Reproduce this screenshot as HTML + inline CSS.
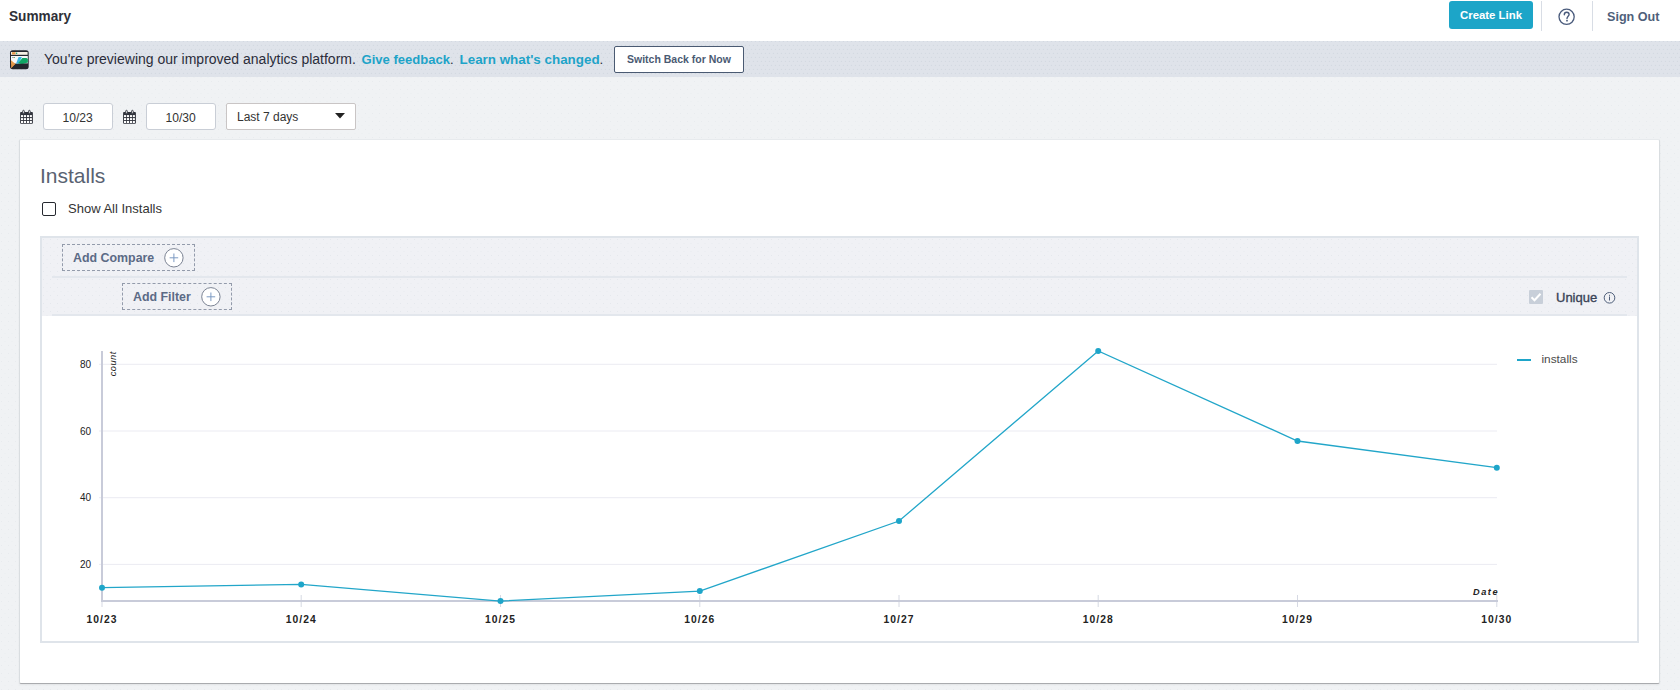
<!DOCTYPE html>
<html><head><meta charset="utf-8">
<style>
*{box-sizing:border-box;margin:0;padding:0}
html,body{width:1680px;height:690px;overflow:hidden}
body{position:relative;background-color:#f0f2f4;background-image:radial-gradient(circle at 1.5px 1.5px,#e8ebee 0.5px,transparent 1px),radial-gradient(circle at 1.5px 1.5px,#eaedf0 0.5px,transparent 1px);background-size:7px 8px,7px 8px;background-position:0 0,3.5px 4px;font-family:"Liberation Sans",sans-serif;color:#333}
.abs{position:absolute}
.t{position:absolute;white-space:nowrap;line-height:1}
#header{left:0;top:0;width:1680px;height:41px;background:#fff}
#banner{left:0;top:41px;width:1680px;height:36px;background-color:#dfe3ea;background-image:radial-gradient(circle at 1.5px 1.5px,#d4d9e1 0.55px,transparent 1.05px),radial-gradient(circle at 1.5px 1.5px,#d4d9e1 0.55px,transparent 1.05px);background-size:4px 8px,4px 8px;background-position:0 3px,2px 7px}
</style></head><body>

<div id="header" class="abs"></div>
<div class="t" style="left:9.3px;top:9px;font-size:14.5px;font-weight:bold;color:#2e3038;transform:scaleX(0.94);transform-origin:0 0">Summary</div>
<div class="abs" style="left:1449px;top:1px;width:84px;height:28px;background:#1ca5c8;border-radius:3px"></div>
<div class="t" style="left:1460px;top:10px;font-size:11.4px;font-weight:bold;color:#fff">Create Link</div>
<div class="abs" style="left:1541px;top:1px;width:1px;height:30px;background:#d8dde5"></div>
<div class="abs" style="left:1592px;top:1px;width:1px;height:30px;background:#d8dde5"></div>
<svg class="abs" style="left:1557px;top:7px" width="20" height="20" viewBox="0 0 20 20"><circle cx="9.6" cy="9.8" r="7.6" fill="none" stroke="#4a5b7c" stroke-width="1.3"/><path d="M7.3 7.7C7.3 6.1 8.3 5.3 9.7 5.3C11.1 5.3 12.1 6.2 12.1 7.5C12.1 9.2 10 9.5 10 11.6" fill="none" stroke="#4a5b7c" stroke-width="1.4" stroke-linecap="round"/><circle cx="10" cy="13.7" r="0.9" fill="#4a5b7c"/></svg>
<div class="t" style="left:1607px;top:10.5px;font-size:12.6px;font-weight:bold;color:#4f5f7a">Sign Out</div>

<div id="banner" class="abs"></div>
<div class="t" style="left:44px;top:52.3px;font-size:14px;color:#2b2d3a">You're previewing our improved analytics platform.</div>
<div class="t" style="left:361.5px;top:52.8px;font-size:13.05px;font-weight:bold;color:#1ea3c8">Give feedback<span style="color:#2b2d3a;font-weight:normal">.</span></div>
<div class="t" style="left:459.5px;top:52.8px;font-size:13.4px;font-weight:bold;color:#1ea3c8">Learn what's changed<span style="color:#2b2d3a;font-weight:normal">.</span></div>
<div class="abs" style="left:614px;top:46px;width:130px;height:27px;background:#fff;border:1.5px solid #4a5a72;border-radius:2px"></div>
<div class="t" style="left:627px;top:54px;font-size:10.5px;font-weight:bold;color:#4a5a72">Switch Back for Now</div>

<!-- date controls -->
<div class="abs" style="left:43px;top:103px;width:70px;height:27px;background:#fff;border:1px solid #c9ced6;border-radius:3px"></div>
<div class="t" style="left:62.5px;top:112px;font-size:12.1px;color:#333">10/23</div>
<div class="abs" style="left:146px;top:103px;width:70px;height:27px;background:#fff;border:1px solid #c9ced6;border-radius:3px"></div>
<div class="t" style="left:165.5px;top:112px;font-size:12.1px;color:#333">10/30</div>
<div class="abs" style="left:226px;top:103px;width:130px;height:27px;background:#fff;border:1px solid #c9c5c5;border-radius:2px"></div>
<div class="t" style="left:237px;top:110.5px;font-size:12px;color:#333">Last 7 days</div>

<!-- card -->
<div class="abs" style="left:19px;top:139px;width:1641px;height:545px;background:#fff;border:1px solid;border-color:#e7eaed #d9dde0 #a9abae #d9dde0;border-radius:2px;box-shadow:0 1px 2px rgba(0,0,0,.06)"></div>
<div class="t" style="left:40px;top:165px;font-size:21px;color:#596271">Installs</div>
<div class="abs" style="left:42px;top:202px;width:14px;height:14px;border:1px solid #25282f;border-radius:2px;background:#fff"></div>
<div class="t" style="left:68px;top:202px;font-size:13px;color:#333">Show All Installs</div>

<!-- chart container -->
<div class="abs" style="left:40px;top:236px;width:1599px;height:407px;border:2px solid #dfe4ea;background:#fff"></div>
<div class="abs" style="left:42px;top:238px;width:1595px;height:78px;background-color:#f0f1f5;background-image:radial-gradient(circle at 1.5px 1.5px,#e5e8ed 0.5px,transparent 1px),radial-gradient(circle at 1.5px 1.5px,#e7eaef 0.5px,transparent 1px);background-size:7px 8px,7px 8px;background-position:0 0,3.5px 4px"></div>


<!-- compare/filter rows -->
<div class="abs" style="left:52px;top:276px;width:1575px;height:2px;background:#e3e7ed"></div>
<div class="abs" style="left:52px;top:314px;width:1575px;height:2px;background:#e3e7ed"></div>
<div class="abs" style="left:62px;top:244px;width:133px;height:27px;border:1px dashed #939bab"></div>
<div class="t" style="left:73px;top:252px;font-size:12.4px;font-weight:bold;color:#5b6a85">Add Compare</div>
<svg class="abs" style="left:163px;top:248px" width="22" height="22" viewBox="0 0 22 22"><circle cx="10.9" cy="9.8" r="9.2" fill="#fff" stroke="#7b8393" stroke-width="1"/><path d="M10.9 5.5v8.6M6.6 9.8h8.6" stroke="#7c9ac2" stroke-width="1"/></svg>
<div class="abs" style="left:122px;top:283px;width:110px;height:27px;border:1px dashed #939bab"></div>
<div class="t" style="left:133px;top:291px;font-size:12.4px;font-weight:bold;color:#5b6a85">Add Filter</div>
<svg class="abs" style="left:200px;top:287px" width="22" height="22" viewBox="0 0 22 22"><circle cx="10.9" cy="9.8" r="9.2" fill="#fff" stroke="#7b8393" stroke-width="1"/><path d="M10.9 5.5v8.6M6.6 9.8h8.6" stroke="#7c9ac2" stroke-width="1"/></svg>
<div class="abs" style="left:1529px;top:290px;width:14px;height:14px;background:#c8cfd9;border-radius:1px"></div>
<svg class="abs" style="left:1529px;top:290px" width="14" height="14" viewBox="0 0 14 14"><path d="M2.5 7.2l3 3 6-6.5" fill="none" stroke="#fff" stroke-width="2"/></svg>
<div class="t" style="left:1556px;top:290.5px;font-size:13px;-webkit-text-stroke:0.35px #3a4356;color:#3a4356">Unique</div>
<svg class="abs" style="left:1603px;top:291px" width="14" height="14" viewBox="0 0 14 14"><circle cx="6.5" cy="6.8" r="5.3" fill="none" stroke="#4f5f7a" stroke-width="1"/><rect x="6" y="5.5" width="1" height="4" fill="#4f5f7a"/><rect x="6" y="3.8" width="1" height="1" fill="#4f5f7a"/></svg>

<!-- calendar icons -->
<svg class="abs" style="left:16px;top:106px" width="22" height="22" viewBox="0 0 22 22"><rect x="4.1" y="6" width="12.8" height="11.7" rx="0.9" fill="#30333c"/><g fill="#fff"><rect x="5.0" y="9.1" width="2.1" height="2"/><rect x="7.9" y="9.1" width="2.1" height="2"/><rect x="10.9" y="9.1" width="2.1" height="2"/><rect x="13.8" y="9.1" width="2.1" height="2"/><rect x="5.0" y="12.1" width="2.1" height="2"/><rect x="7.9" y="12.1" width="2.1" height="2"/><rect x="10.9" y="12.1" width="2.1" height="2"/><rect x="13.8" y="12.1" width="2.1" height="2"/><rect x="5.0" y="15.0" width="2.1" height="2"/><rect x="7.9" y="15.0" width="2.1" height="2"/><rect x="10.9" y="15.0" width="2.1" height="2"/><rect x="13.8" y="15.0" width="2.1" height="2"/></g><rect x="6.7" y="4.3" width="1.6" height="3.4" rx="0.8" fill="#fff" stroke="#30333c" stroke-width="0.9"/><rect x="12.6" y="4.3" width="1.6" height="3.4" rx="0.8" fill="#fff" stroke="#30333c" stroke-width="0.9"/></svg>
<svg class="abs" style="left:119px;top:106px" width="22" height="22" viewBox="0 0 22 22"><rect x="4.1" y="6" width="12.8" height="11.7" rx="0.9" fill="#30333c"/><g fill="#fff"><rect x="5.0" y="9.1" width="2.1" height="2"/><rect x="7.9" y="9.1" width="2.1" height="2"/><rect x="10.9" y="9.1" width="2.1" height="2"/><rect x="13.8" y="9.1" width="2.1" height="2"/><rect x="5.0" y="12.1" width="2.1" height="2"/><rect x="7.9" y="12.1" width="2.1" height="2"/><rect x="10.9" y="12.1" width="2.1" height="2"/><rect x="13.8" y="12.1" width="2.1" height="2"/><rect x="5.0" y="15.0" width="2.1" height="2"/><rect x="7.9" y="15.0" width="2.1" height="2"/><rect x="10.9" y="15.0" width="2.1" height="2"/><rect x="13.8" y="15.0" width="2.1" height="2"/></g><rect x="6.7" y="4.3" width="1.6" height="3.4" rx="0.8" fill="#fff" stroke="#30333c" stroke-width="0.9"/><rect x="12.6" y="4.3" width="1.6" height="3.4" rx="0.8" fill="#fff" stroke="#30333c" stroke-width="0.9"/></svg>
<svg class="abs" style="left:335px;top:113px" width="10" height="6" viewBox="0 0 10 6"><path d="M0 0h10L5 5.5z" fill="#222"/></svg>
<!-- banner icon -->
<svg class="abs" style="left:0;top:40px" width="40" height="40" viewBox="0 40 40 40">
<rect x="10" y="50.3" width="18.7" height="18.9" rx="2.6" fill="#25272f"/>
<rect x="11" y="52" width="16.6" height="2.8" fill="#f5efe4"/>
<rect x="12" y="52.2" width="3.5" height="2.2" fill="#e69847"/>
<circle cx="16.6" cy="53.3" r="0.8" fill="#17a46b"/>
<rect x="11" y="56" width="16.8" height="7.6" fill="#f7f8f9"/>
<circle cx="12.7" cy="57.4" r="0.5" fill="#3b8fd0"/><circle cx="13.5" cy="57.4" r="0.5" fill="#e69847"/><circle cx="14.5" cy="57.4" r="0.5" fill="#17a46b"/>
<path d="M11 60.3 L15.6 64 L11.2 68.6z" fill="#e3974a"/>
<path d="M16 63.8 L18.6 57 L21.8 57 L19 63.6z" fill="#3bb5e2"/>
<path d="M18.1 63.3 L22.3 58.1 L26.5 58 L27.9 59.1 L27.9 62.6 L22 64.2z" fill="#10a765"/>
<path d="M15.6 63.9 L27.9 63.4 L27.9 68.6 L11.2 68.6z" fill="#23262d"/>
</svg>
<svg class="abs" style="left:0;top:0" width="1680" height="690" viewBox="0 0 1680 690">
<line x1="99" y1="364.3" x2="1497" y2="364.3" stroke="#ebebf2" stroke-width="1"/>
<text x="91" y="367.8" text-anchor="end" font-size="10" fill="#222">80</text>
<line x1="99" y1="431.0" x2="1497" y2="431.0" stroke="#ebebf2" stroke-width="1"/>
<text x="91" y="434.5" text-anchor="end" font-size="10" fill="#222">60</text>
<line x1="99" y1="497.7" x2="1497" y2="497.7" stroke="#ebebf2" stroke-width="1"/>
<text x="91" y="501.2" text-anchor="end" font-size="10" fill="#222">40</text>
<line x1="99" y1="564.4" x2="1497" y2="564.4" stroke="#ebebf2" stroke-width="1"/>
<text x="91" y="567.9" text-anchor="end" font-size="10" fill="#222">20</text>
<line x1="102.0" y1="595" x2="102.0" y2="607" stroke="#d6d9e3" stroke-width="1"/>
<text x="102.0" y="623" text-anchor="middle" font-size="10.3" font-weight="bold" letter-spacing="1.05" fill="#222">10/23</text>
<line x1="301.2" y1="595" x2="301.2" y2="607" stroke="#d6d9e3" stroke-width="1"/>
<text x="301.2" y="623" text-anchor="middle" font-size="10.3" font-weight="bold" letter-spacing="1.05" fill="#222">10/24</text>
<line x1="500.5" y1="595" x2="500.5" y2="607" stroke="#d6d9e3" stroke-width="1"/>
<text x="500.5" y="623" text-anchor="middle" font-size="10.3" font-weight="bold" letter-spacing="1.05" fill="#222">10/25</text>
<line x1="699.8" y1="595" x2="699.8" y2="607" stroke="#d6d9e3" stroke-width="1"/>
<text x="699.8" y="623" text-anchor="middle" font-size="10.3" font-weight="bold" letter-spacing="1.05" fill="#222">10/26</text>
<line x1="899.0" y1="595" x2="899.0" y2="607" stroke="#d6d9e3" stroke-width="1"/>
<text x="899.0" y="623" text-anchor="middle" font-size="10.3" font-weight="bold" letter-spacing="1.05" fill="#222">10/27</text>
<line x1="1098.2" y1="595" x2="1098.2" y2="607" stroke="#d6d9e3" stroke-width="1"/>
<text x="1098.2" y="623" text-anchor="middle" font-size="10.3" font-weight="bold" letter-spacing="1.05" fill="#222">10/28</text>
<line x1="1297.5" y1="595" x2="1297.5" y2="607" stroke="#d6d9e3" stroke-width="1"/>
<text x="1297.5" y="623" text-anchor="middle" font-size="10.3" font-weight="bold" letter-spacing="1.05" fill="#222">10/29</text>
<line x1="1496.8" y1="595" x2="1496.8" y2="607" stroke="#d6d9e3" stroke-width="1"/>
<text x="1496.8" y="623" text-anchor="middle" font-size="10.3" font-weight="bold" letter-spacing="1.05" fill="#222">10/30</text>
<rect x="101" y="351" width="2" height="251" fill="#c8cbd9"/>
<rect x="101" y="600" width="1397" height="2" fill="#c8cbd9"/>
<polyline fill="none" stroke="#22a6c9" stroke-width="1.3" points="102.0,587.7 301.2,584.4 500.5,601.1 699.8,591.1 899.0,521.0 1098.2,351.0 1297.5,441.0 1496.8,467.7"/>
<circle cx="102.0" cy="587.7" r="3" fill="#1ea5c9"/>
<circle cx="301.2" cy="584.4" r="3" fill="#1ea5c9"/>
<circle cx="500.5" cy="601.1" r="3" fill="#1ea5c9"/>
<circle cx="699.8" cy="591.1" r="3" fill="#1ea5c9"/>
<circle cx="899.0" cy="521.0" r="3" fill="#1ea5c9"/>
<circle cx="1098.2" cy="351.0" r="3" fill="#1ea5c9"/>
<circle cx="1297.5" cy="441.0" r="3" fill="#1ea5c9"/>
<circle cx="1496.8" cy="467.7" r="3" fill="#1ea5c9"/>
<text transform="translate(115.8,376.3) rotate(-90)" font-size="9.3" font-style="italic" letter-spacing="0.45" fill="#222">count</text>
<text x="1499" y="594.6" text-anchor="end" font-size="9.2" font-weight="bold" font-style="italic" letter-spacing="1.5" fill="#222">Date</text>
<rect x="1517" y="359" width="14" height="2" fill="#1ea5c9"/>
<text x="1541.5" y="363" font-size="11.8" fill="#4a4a4a">installs</text>
</svg>
</body></html>
